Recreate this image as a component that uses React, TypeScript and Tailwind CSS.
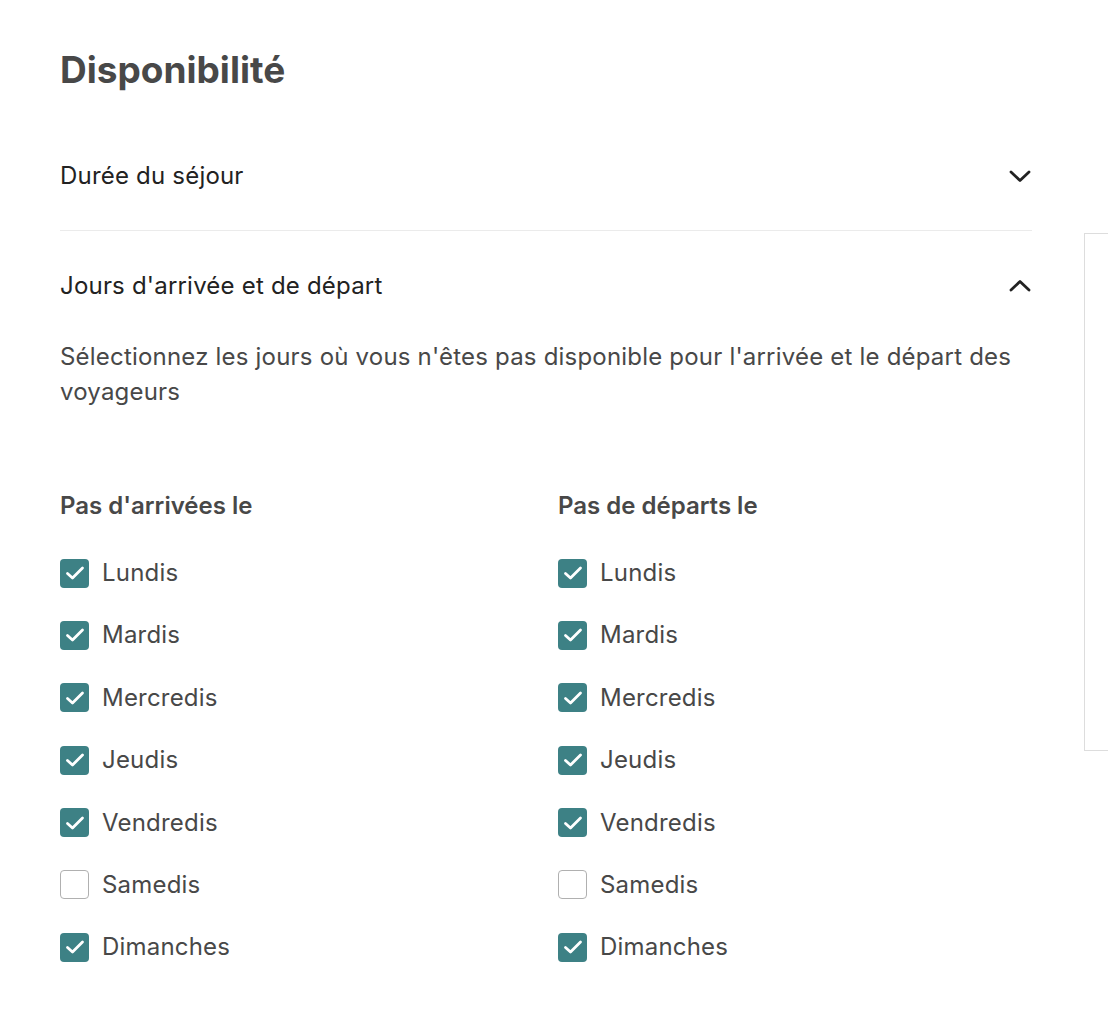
import type { FC } from "react";

const days = ["Lundis", "Mardis", "Mercredis", "Jeudis", "Vendredis", "Samedis", "Dimanches"];
const arrivals = [true, true, true, true, true, false, true];
const departures = [true, true, true, true, true, false, true];

const Chevron: FC<{ up?: boolean }> = ({ up }) => (
  <svg width="24" height="24" viewBox="0 0 24 24" fill="none" className="text-[#222222]">
    <path
      d={up ? "M3 16 L12 7.5 L21 16" : "M3 8 L12 16.5 L21 8"}
      stroke="currentColor"
      strokeWidth="2.8"
      strokeLinecap="round"
      strokeLinejoin="round"
    />
  </svg>
);

const Checkbox: FC<{ checked: boolean }> = ({ checked }) =>
  checked ? (
    <span className="flex h-[29px] w-[29px] shrink-0 items-center justify-center rounded-[4px] bg-[#3d8185]">
      <svg width="22" height="22" viewBox="0 0 22 22" fill="none">
        <path d="M3.5 11.5 L8.5 16 L18.5 6" stroke="white" strokeWidth="2.8" strokeLinecap="round" strokeLinejoin="round" />
      </svg>
    </span>
  ) : (
    <span className="h-[29px] w-[29px] shrink-0 rounded-[4px] border border-[#b0b0b0] bg-white" />
  );

const DayColumn: FC<{ title: string; values: boolean[] }> = ({ title, values }) => (
  <div>
    <div className="text-[24px] leading-[30px] font-semibold text-[#484848]">{title}</div>
    <div className="mt-[37px] flex flex-col gap-[32.4px]">
      {days.map((d, i) => (
        <label key={d} className="flex h-[30px] items-center gap-[13px]">
          <Checkbox checked={values[i]} />
          <span className="text-[24px] leading-[30px] tracking-[0.2px] text-[#484848]">{d}</span>
        </label>
      ))}
    </div>
  </div>
);

const App: FC = () => {
  return (
    <div className="flex min-h-[1024px] overflow-hidden bg-white font-['Inter','Liberation_Sans',sans-serif]">
      <div className="w-[972px] shrink-0 pl-[60px] box-content">
        <h1 className="pt-[50px] text-[37px] leading-[40px] font-bold text-[#484848]">Disponibilité</h1>

        <div className="mt-[31px] flex h-[110px] items-center justify-between border-b border-[#ebebeb]">
          <span className="text-[24px] leading-[30px] tracking-[0.2px] text-[#222222]">Durée du séjour</span>
          <Chevron />
        </div>

        <div className="flex items-center justify-between pt-[40px]">
          <span className="text-[24px] leading-[30px] tracking-[0.2px] text-[#222222]">Jours d'arrivée et de départ</span>
          <Chevron up />
        </div>

        <p className="mt-[38px] text-[24px] leading-[35px] tracking-[0.2px] text-[#484848]">
          Sélectionnez les jours où vous n'êtes pas disponible pour l'arrivée et le départ des voyageurs
        </p>

        <div className="mt-[82px] grid grid-cols-[498px_1fr] pb-[60px]">
          <DayColumn title="Pas d'arrivées le" values={arrivals} />
          <DayColumn title="Pas de départs le" values={departures} />
        </div>
      </div>

      <aside className="ml-[52px] mt-[233px] h-[518px] w-[400px] shrink-0 border-y border-l border-[#dddddd]" />
    </div>
  );
};

export default App;
